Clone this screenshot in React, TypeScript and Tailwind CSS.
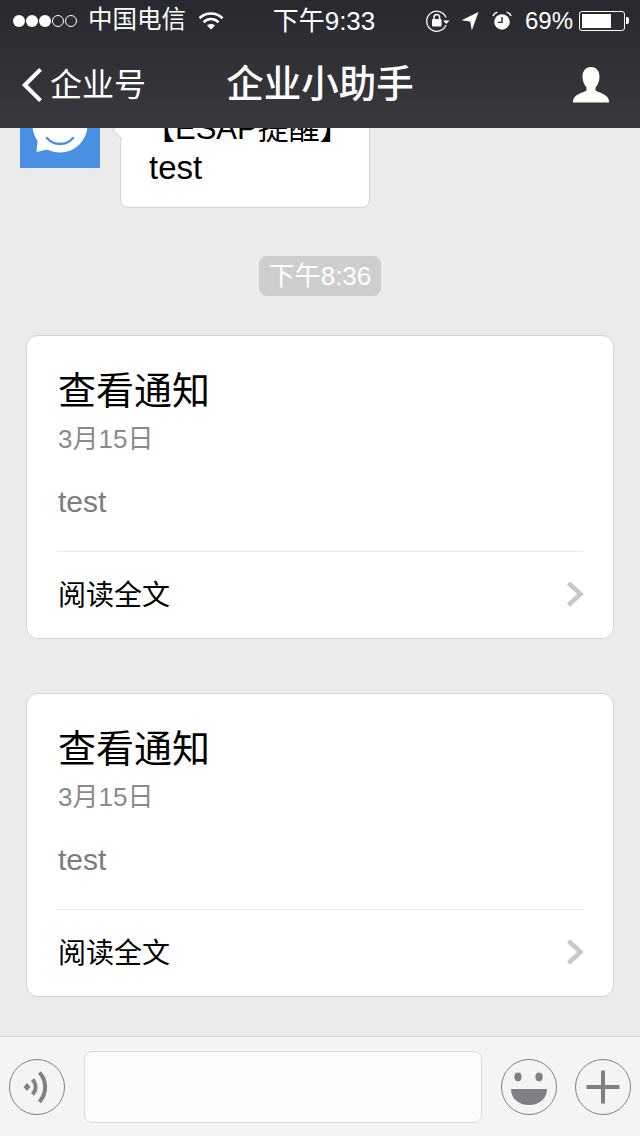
const FONT = "font-['Liberation_Sans','Noto_Sans_CJK_SC',sans-serif]";

function Signal() {
  return (
    <div className="flex items-center gap-[1px]">
      {[0, 1, 2].map((i) => (
        <span key={i} className="w-[12px] h-[12px] rounded-full bg-white" />
      ))}
      {[0, 1].map((i) => (
        <span key={i} className="w-[12px] h-[12px] rounded-full border border-white" />
      ))}
    </div>
  );
}

function Wifi() {
  return (
    <svg width="26" height="20" viewBox="0 0 26 20" fill="none" stroke="white" strokeWidth="2.6">
      <path d="M1.5 7.2C8 1 18 1 24.5 7.2" />
      <path d="M5.5 11.2C10 7 16 7 20.5 11.2" />
      <path d="M13 18.5L9 14.6C11.2 12.6 14.8 12.6 17 14.6Z" fill="white" stroke="none" />
    </svg>
  );
}

function RotationLock() {
  return (
    <svg width="24" height="22" viewBox="0 0 24 22" fill="none">
      <path d="M20 7.5A10 10 0 1 0 20 15" stroke="white" strokeWidth="1.3" />
      <path d="M17 10.5h6.5l-3.2 3.6z" fill="white" />
      <rect x="6" y="9" width="9.5" height="7.5" rx="1" fill="white" />
      <path d="M8 9V7.2a2.8 2.8 0 0 1 5.6 0V9" stroke="white" strokeWidth="1.5" />
    </svg>
  );
}

function Location() {
  return (
    <svg width="18" height="20" viewBox="0 0 18 20">
      <path d="M17.5 1L0.5 9.2L9.2 10.4L10.8 19.5Z" fill="white" />
    </svg>
  );
}

function Alarm() {
  return (
    <svg width="20" height="20" viewBox="0 0 22 22" fill="none">
      <circle cx="11" cy="12" r="8.5" fill="white" />
      <path d="M11 6.5V12.5H6.5" stroke="#2f2f34" strokeWidth="1.6" />
      <path d="M1 5.5C2 3 3.6 1.8 6 1.2" stroke="white" strokeWidth="1.6" />
      <path d="M21 5.5C20 3 18.4 1.8 16 1.2" stroke="white" strokeWidth="1.6" />
    </svg>
  );
}

function Battery() {
  return (
    <div className="flex items-center">
      <div className="w-[46px] h-[20px] rounded-[3px] border border-white p-[2px]">
        <div className="h-full w-[29px] bg-white" />
      </div>
      <span className="w-[3px] h-[7px] ml-[1px] rounded-r-[2px] bg-white" />
    </div>
  );
}

function StatusBar() {
  return (
    <div className="h-[40px] pl-[13px] pr-[11px] pt-[1px] flex items-center justify-between text-white">
      <div className="flex items-center w-[258px]">
        <Signal />
        <span className="ml-[11px] text-[24.500px] leading-none whitespace-nowrap">中国电信</span>
        <span className="ml-[12px]"><Wifi /></span>
      </div>
      <span className="shrink-0 text-[26px] leading-none whitespace-nowrap">下午9:33</span>
      <div className="flex items-center w-[252px] justify-end">
        <RotationLock />
        <span className="ml-[11px]"><Location /></span>
        <span className="ml-[13px]"><Alarm /></span>
        <span className="ml-[13px] text-[24px] leading-none">69%</span>
        <span className="ml-[6px]"><Battery /></span>
      </div>
    </div>
  );
}

function NavBar() {
  return (
    <div className="h-[88px] pt-[1px] px-[20px] flex items-center justify-between text-white">
      <div className="flex items-center w-[180px]">
        <svg width="24" height="36" viewBox="0 0 24 38" fill="none" stroke="white" strokeWidth="4.4">
          <path d="M21 2.5L4.5 19L21 35.5" />
        </svg>
        <span className="ml-[6px] text-[32px] leading-none">企业号</span>
      </div>
      <span className="text-[37.500px] leading-none font-medium">企业小助手</span>
      <div className="w-[180px] flex justify-end pr-[10px]">
        <svg width="38" height="36" viewBox="0 0 38 36" fill="white">
          <path d="M19 0C13 0 10.500 4.500 10.500 10C10.500 14.500 12.500 18 14.500 20.500L14.500 23.500C10 26 3 27.500 1.500 32C1 33.500 1 35 1 35.500H37C37 35 37 33.500 36.500 32C35 27.500 28 26 23.500 23.500V20.500C25.500 18 27.500 14.500 27.500 10C27.500 4.500 25 0 19 0Z" />
        </svg>
      </div>
    </div>
  );
}

function Avatar() {
  return (
    <div className="w-[80px] h-[80px] bg-[#4a90e2] shrink-0 flex items-center justify-center">
      <svg width="60" height="60" viewBox="0 0 60 60">
        <circle cx="30" cy="27" r="27.500" fill="white" />
        <path d="M8 38L6.500 54L24 50Z" fill="white" />
        <path d="M17 40C24 48 36 48 43 40" fill="none" stroke="#4a90e2" strokeWidth="2.400" strokeLinecap="round" />
      </svg>
    </div>
  );
}

function ArticleCard() {
  return (
    <div className="mx-[26px] bg-white rounded-[12px] border border-[#d4d4d4]">
      <div className="px-[31px] pt-[33px]">
        <div className="text-[38px] leading-[44px] text-black">查看通知</div>
        <div className="mt-[11px] text-[26px] leading-[30px] text-[#8a8a8a]">3月15日</div>
        <div className="mt-[31px] text-[30px] leading-[34px] text-[#7c7c7c]">test</div>
      </div>
      <div className="ml-[30px] mr-[30px] mt-[32px] h-[1px] bg-[#eaeaea]" />
      <div className="pl-[31px] pr-[29px] h-[86px] flex items-center justify-between">
        <span className="pt-[2px] text-[28px] leading-none text-black">阅读全文</span>
        <svg className="-mt-[2px]" width="18" height="26" viewBox="0 0 18 26" fill="none" stroke="#c7c7cc" strokeWidth="4.500">
          <path d="M2.500 2L14.500 13L2.500 24" />
        </svg>
      </div>
    </div>
  );
}

function Composer() {
  return (
    <div className="h-[100px] shrink-0 bg-[#f4f4f6] border-t border-[#d6d6d8] pl-[9px] pr-[9px] flex items-center">
      <div className="w-[56px] h-[56px] rounded-full border border-[#808084] flex items-center justify-center">
        <svg width="54" height="54" viewBox="1 1 54 54" fill="none" stroke="#808084" strokeWidth="4">
          <path d="M18 24L21.500 28L18 32L14.500 28Z" fill="#808084" stroke="none" />
          <path d="M23.500 20.500C27.500 25 27.500 31 23.500 35.500" />
          <path d="M30.500 13.500C38 22 38 34 30.500 43" />
        </svg>
      </div>
      <div className="ml-[19px] flex-1 h-[72px] rounded-[8px] bg-[#fbfbfb] border border-[#dcdcdc]" />
      <div className="ml-[19px] w-[56px] h-[56px] rounded-full border border-[#808084] flex items-center justify-center">
        <svg width="54" height="54" viewBox="0 0 54 54" fill="#808084">
          <ellipse cx="16" cy="17" rx="3.600" ry="4.400" />
          <ellipse cx="37" cy="17" rx="3.600" ry="4.400" />
          <path d="M9 29H45C45 39 37 45 27 45C17 45 9 39 9 29Z" />
        </svg>
      </div>
      <div className="ml-[18px] w-[56px] h-[56px] rounded-full border border-[#808084] flex items-center justify-center">
        <svg width="34" height="34" viewBox="0 0 34 34" fill="#808084">
          <rect x="15" y="0.500" width="4" height="33" />
          <rect x="0.500" y="15" width="33" height="4" />
        </svg>
      </div>
    </div>
  );
}

export default function App() {
  return (
    <div className={`${FONT} w-[640px] h-[1136px] flex flex-col overflow-hidden bg-[#ebebeb]`}>
      <header className="relative z-10 shrink-0 h-[128px] bg-gradient-to-b from-[#28292e] to-[#39393e]">
        <StatusBar />
        <NavBar />
      </header>

      <main className="flex-1 overflow-hidden">
        <div className="-mt-[40px] pl-[20px] flex items-start">
          <Avatar />
          <div className="relative ml-[20px] w-[250px] h-[120px] bg-white rounded-[8px] border border-[#d4d4d4] pl-[28px]">
            <span className="absolute -left-[6px] top-[34px] w-[14px] h-[14px] rotate-45 bg-white border-l border-b border-[#d4d4d4]" />
            <div className="relative pt-[23px] -ml-[5px] text-[31px] leading-[34px] whitespace-nowrap text-black">【ESAP提醒】</div>
            <div className="relative mt-[4px] text-[33px] leading-[36px] text-black">test</div>
          </div>
        </div>

        <div className="mt-[48px] flex justify-center">
          <span className="h-[40px] px-[10px] rounded-[8px] bg-[#cecece] text-white text-[26px] leading-[40px]">下午8:36</span>
        </div>

        <div className="mt-[39px] flex flex-col gap-[54px]">
          <ArticleCard />
          <ArticleCard />
        </div>
      </main>

      <Composer />
    </div>
  );
}
